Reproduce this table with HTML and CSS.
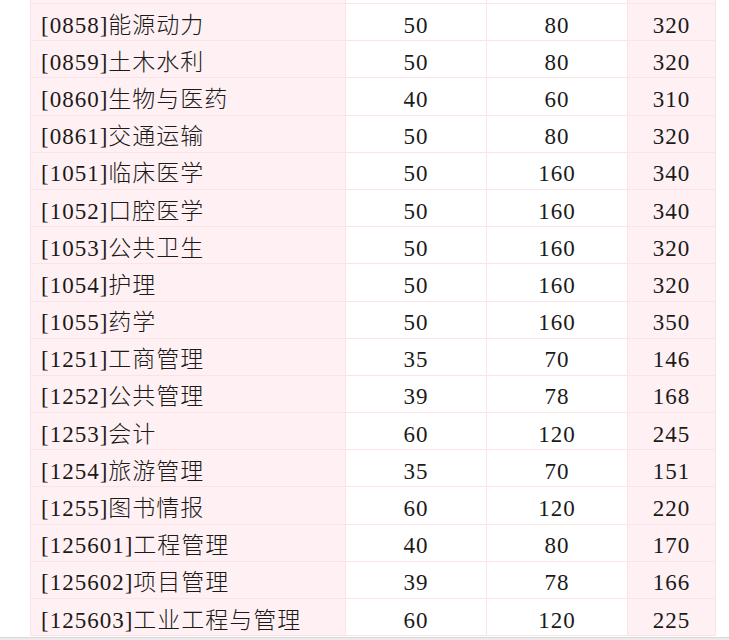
FILE: index.html
```html
<!DOCTYPE html>
<html lang="zh-CN">
<head>
<meta charset="utf-8">
<title>分数线</title>
<link rel="stylesheet" href="styles.css">
</head>
<body>
<div class="page">
  <div class="viewport">
    <table class="score-table">
      <colgroup>
        <col class="c-name"><col class="c-num"><col class="c-num"><col class="c-total">
      </colgroup>
      <tbody>
        <tr class="spacer"><td class="name"></td><td></td><td></td><td class="total"></td></tr>
        <tr><td class="name">[0858]能源动力</td><td>50</td><td>80</td><td class="total">320</td></tr>
        <tr><td class="name">[0859]土木水利</td><td>50</td><td>80</td><td class="total">320</td></tr>
        <tr><td class="name">[0860]生物与医药</td><td>40</td><td>60</td><td class="total">310</td></tr>
        <tr><td class="name">[0861]交通运输</td><td>50</td><td>80</td><td class="total">320</td></tr>
        <tr><td class="name">[1051]临床医学</td><td>50</td><td>160</td><td class="total">340</td></tr>
        <tr><td class="name">[1052]口腔医学</td><td>50</td><td>160</td><td class="total">340</td></tr>
        <tr><td class="name">[1053]公共卫生</td><td>50</td><td>160</td><td class="total">320</td></tr>
        <tr><td class="name">[1054]护理</td><td>50</td><td>160</td><td class="total">320</td></tr>
        <tr><td class="name">[1055]药学</td><td>50</td><td>160</td><td class="total">350</td></tr>
        <tr><td class="name">[1251]工商管理</td><td>35</td><td>70</td><td class="total">146</td></tr>
        <tr><td class="name">[1252]公共管理</td><td>39</td><td>78</td><td class="total">168</td></tr>
        <tr><td class="name">[1253]会计</td><td>60</td><td>120</td><td class="total">245</td></tr>
        <tr><td class="name">[1254]旅游管理</td><td>35</td><td>70</td><td class="total">151</td></tr>
        <tr><td class="name">[1255]图书情报</td><td>60</td><td>120</td><td class="total">220</td></tr>
        <tr><td class="name">[125601]工程管理</td><td>40</td><td>80</td><td class="total">170</td></tr>
        <tr><td class="name">[125602]项目管理</td><td>39</td><td>78</td><td class="total">166</td></tr>
        <tr><td class="name">[125603]工业工程与管理</td><td>60</td><td>120</td><td class="total">225</td></tr>
      </tbody>
    </table>
  </div>
  <div class="scrollbar"></div>
</div>
</body>
</html>
```
FILE: styles.css
```css
html, body {
  margin: 0;
  padding: 0;
  background: #ffffff;
}

.page {
  width: 729px;
  height: 640px;
  display: flex;
  flex-direction: column;
  overflow: hidden;
}

.viewport {
  flex: 0 0 637px;
  overflow: hidden;
  padding-left: 30px;
}

.score-table {
  border-collapse: collapse;
  table-layout: fixed;
  width: 685px;
  font-family: "Liberation Serif", "Noto Sans CJK SC", serif;
  font-size: 23px;
  font-weight: 300;
  color: #1a1a1a;
}

.c-name { width: 315px; }
.c-num { width: 141px; }
.c-total { width: 88px; }

.score-table td {
  height: 30.2px;
  padding: 6px 0 0 0;
  border: 1px solid #fbe3e7;
  text-align: center;
  vertical-align: middle;
  white-space: nowrap;
  line-height: 1;
  letter-spacing: 1px;
}

.score-table tr.spacer td {
  height: 3px;
  padding: 0;
  border-top: none;
}

.score-table td.name {
  text-align: left;
  padding-left: 10px;
  background: #fff1f3;
}

.score-table td.total {
  background: #fff1f3;
}

.scrollbar {
  flex: 0 0 3px;
  background: #ebebeb;
  border-top: 1px solid #d9d9d9;
}
```
